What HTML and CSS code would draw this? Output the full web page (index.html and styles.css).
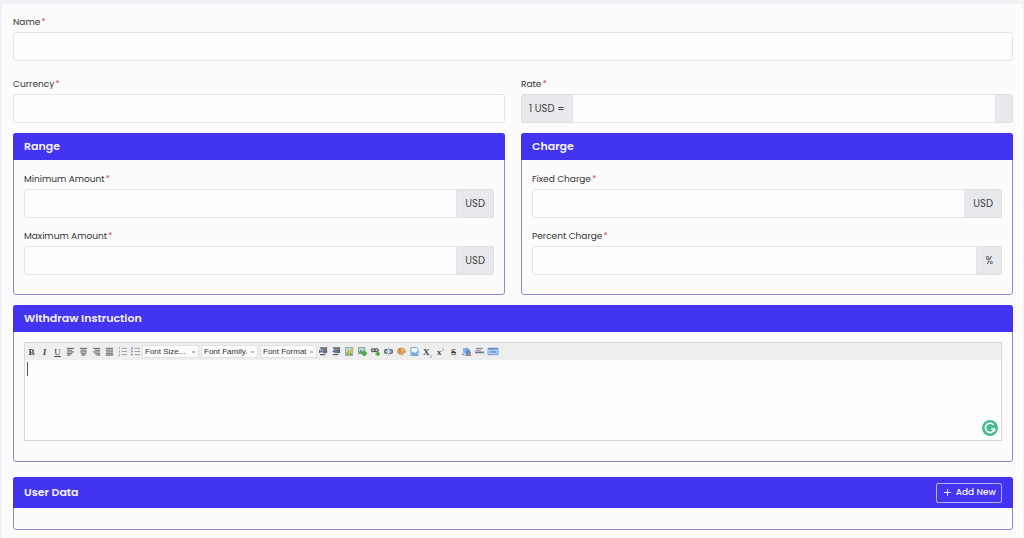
FILE: index.html
```html
<!DOCTYPE html>
<html lang="en">
<head>
    <meta charset="UTF-8">
    <meta name="viewport" content="width=device-width, initial-scale=1.0">
    <title>Withdraw Method</title>
    <link rel="stylesheet" href="styles.css">
</head>
<body>
    <form class="method-form">
        <div class="form-group">
            <label for="name">Name<span class="required">*</span></label>
            <input class="form-control" type="text" id="name" name="name" required>
        </div>

        <div class="row">
            <div class="form-group">
                <label for="currency">Currency<span class="required">*</span></label>
                <input class="form-control" type="text" id="currency" name="currency" required>
            </div>
            <div class="form-group">
                <label for="rate">Rate<span class="required">*</span></label>
                <div class="input-group">
                    <span class="input-text">1 USD =</span>
                    <input class="form-control" type="text" id="rate" name="rate" required>
                    <span class="input-text empty"></span>
                </div>
            </div>
        </div>

        <div class="row cards">
            <section class="card">
                <h2 class="card-header">Range</h2>
                <div class="card-body">
                    <div class="form-group">
                        <label for="minAmount">Minimum Amount<span class="required">*</span></label>
                        <div class="input-group">
                            <input class="form-control" type="text" id="minAmount" name="min_limit" required>
                            <span class="input-text">USD</span>
                        </div>
                    </div>
                    <div class="form-group">
                        <label for="maxAmount">Maximum Amount<span class="required">*</span></label>
                        <div class="input-group">
                            <input class="form-control" type="text" id="maxAmount" name="max_limit" required>
                            <span class="input-text">USD</span>
                        </div>
                    </div>
                </div>
            </section>
            <section class="card">
                <h2 class="card-header">Charge</h2>
                <div class="card-body">
                    <div class="form-group">
                        <label for="fixedCharge">Fixed Charge<span class="required">*</span></label>
                        <div class="input-group">
                            <input class="form-control" type="text" id="fixedCharge" name="fixed_charge" required>
                            <span class="input-text">USD</span>
                        </div>
                    </div>
                    <div class="form-group">
                        <label for="percentCharge">Percent Charge<span class="required">*</span></label>
                        <div class="input-group">
                            <input class="form-control" type="text" id="percentCharge" name="percent_charge" required>
                            <span class="input-text">%</span>
                        </div>
                    </div>
                </div>
            </section>
        </div>

        <section class="card">
            <h2 class="card-header">Withdraw Instruction</h2>
            <div class="card-body">
                <div class="editor">
                    <div class="toolbar">
                        <button type="button" aria-label="Bold"><b>B</b></button>
                        <button type="button" aria-label="Italic"><b><i>I</i></b></button>
                        <button type="button" aria-label="Underline"><u>U</u></button>
                        <button type="button" aria-label="Align left"><svg viewBox="0 0 10 10"><path d="M1 1.5h8M1 3.5h6M1 5.5h8M1 7.5h6M1 9h4" stroke="#555"/></svg></button>
                        <button type="button" aria-label="Align center"><svg viewBox="0 0 10 10"><path d="M1 1.5h8M2 3.5h6M1 5.5h8M2 7.5h6M3 9h4" stroke="#555"/></svg></button>
                        <button type="button" aria-label="Align right"><svg viewBox="0 0 10 10"><path d="M1 1.5h8M3 3.5h6M1 5.5h8M3 7.5h6M5 9h4" stroke="#555"/></svg></button>
                        <button type="button" aria-label="Justify"><svg viewBox="0 0 10 10"><path d="M1 1.5h8M1 3.5h8M1 5.5h8M1 7.5h8M1 9h8" stroke="#555"/></svg></button>
                        <button type="button" aria-label="Numbered list"><svg viewBox="0 0 10 10"><path d="M1.5 0v2.5M1.5 3.8v2.5M1.5 7.5v2.5" stroke="#8aa6cc"/><path d="M4 1.5h6M4 5h6M4 8.5h6" stroke="#999"/></svg></button>
                        <button type="button" aria-label="Bulleted list"><svg viewBox="0 0 10 10"><path d="M0 1.5h2M0 5h2M0 8.5h2" stroke="#7f9fcb" stroke-width="2"/><path d="M4 1.5h6M4 5h6M4 8.5h6" stroke="#999"/></svg></button>
                        <select aria-label="Font size"><option>Font Size...</option></select>
                        <select aria-label="Font family"><option>Font Family.</option></select>
                        <select aria-label="Font format"><option>Font Format</option></select>
                        <button type="button" aria-label="Indent"><svg viewBox="0 0 10 10"><path d="M1 1h8v6H4" fill="#8b9099"/><path d="M1 1h8M5 3.5h4M5 5.5h4M1 8.5h6" stroke="#5c6066" stroke-width="1.5"/><path d="M0 3l4 2-4 2z" fill="#3f6ca8"/></svg></button>
                        <button type="button" aria-label="Outdent"><svg viewBox="0 0 10 10"><path d="M1 1h8v6H4" fill="#8b9099"/><path d="M1 1h8M5 3.5h4M5 5.5h4M1 8.5h6" stroke="#5c6066" stroke-width="1.5"/><path d="M4 3L0 5l4 2z" fill="#3f6ca8"/></svg></button>
                        <button type="button" aria-label="Edit image"><svg viewBox="0 0 10 10"><path d="M.5.5h8v9h-8z" fill="#bdd8c0" stroke="#8ca7ab"/><path d="M1 8l3-4 4 4v1H1z" fill="#6bab5b"/><path d="M3 7l5-6 2 1-5 6-2 1z" fill="#e5b950"/></svg></button>
                        <button type="button" aria-label="Add image"><svg viewBox="0 0 10 10"><path d="M.5.5h7v7h-7z" fill="#b7d6de" stroke="#7ea398"/><path d="M1 6l2-3 4 4H1z" fill="#5b9f52"/><path d="M7 4v6M4 7h6" stroke="#4aa548" stroke-width="2.5"/></svg></button>
                        <button type="button" aria-label="Add link"><svg viewBox="0 0 10 10"><rect x=".5" y="2" width="4" height="3" rx="1.5" fill="none" stroke="#565d67" stroke-width="1.5"/><rect x="4" y="2" width="4" height="3" rx="1.5" fill="none" stroke="#565d67" stroke-width="1.5"/><path d="M7.5 5v5M5 7.5h5" stroke="#54a34a" stroke-width="2"/></svg></button>
                        <button type="button" aria-label="Remove link"><svg viewBox="0 0 10 10"><path d="M4 3H2.500a2 2 0 000 4H4M6 3h1.500a2 2 0 010 4H6" fill="#a9b8cc" stroke="#61738d" stroke-width="1.5"/><path d="M5 1v1.500M5 7.500v1.500" stroke="#889"/></svg></button>
                        <button type="button" aria-label="Font color"><svg viewBox="0 0 10 10"><path d="M5 .5C8 .5 10 2.500 10 5S8 6 7.500 7.500 6 9.500 4 9C1.500 8.500 0 7 0 4.500S2 .5 5 .5z" fill="#dba15f"/><circle cx="3" cy="3" r="1" fill="#c4644d"/><circle cx="6.500" cy="3" r="1" fill="#f0d77c"/><circle cx="3" cy="6" r="1" fill="#7d94a8"/></svg></button>
                        <button type="button" aria-label="Background color"><svg viewBox="0 0 10 10"><path d="M1 .5h6l2 2v7H1z" fill="#f1f8ff" stroke="#6d9bd0"/><path d="M1.500 9V6l2-1 2 2 3-3v5z" fill="#75ace0"/></svg></button>
                        <button type="button" aria-label="Subscript"><span><b>X</b><sub>2</sub></span></button>
                        <button type="button" aria-label="Superscript"><span><b>x</b><sup>2</sup></span></button>
                        <button type="button" aria-label="Strike through"><s><b>S</b></s></button>
                        <button type="button" aria-label="Remove formatting"><svg viewBox="0 0 10 10"><path d="M1 1h5v6H1z" fill="#8cb4e2"/><path d="M4 3h4l2 3v4H4z" fill="#5d8fcf"/><path d="M5 1l4 3M0 8l3 1" stroke="#597aa4"/><circle cx="8" cy="8" r="1.5" fill="#d98c64"/></svg></button>
                        <button type="button" aria-label="Horizontal rule"><svg viewBox="0 0 10 10"><path d="M1 1.5h8M1 3.5h6" stroke="#777"/><path d="M0 6h10" stroke="#6680a8" stroke-width="2"/></svg></button>
                        <button type="button" aria-label="Edit HTML"><svg class="wide" viewBox="0 0 12 10"><path d="M.5 1.5h11v7H.5z" fill="#dceafa" stroke="#5c8dd0"/><path d="M1 2h10" stroke="#5c8dd0" stroke-width="2"/><path d="M2 4h8v3H2z" fill="#72a3df"/></svg></button>
                    </div>
                    <textarea class="editor-area" id="instruction" name="instruction" aria-label="Withdraw Instruction"></textarea>
                    <span class="caret"></span>
                    <svg class="checker" viewBox="0 0 16 16"><circle cx="8" cy="8" r="8" fill="#4cba92"/><path d="M11.5 4.8A4.600 4.600 0 1 0 12.500 9H9.200M12.500 8.500v3" fill="none" stroke="#fff" stroke-width="1.5"/></svg>
                </div>
            </div>
        </section>

        <section class="card user-data">
            <div class="card-header">
                <h2>User Data</h2>
                <button type="button" class="add-button"><svg viewBox="0 0 8 8"><path d="M4 0v8M0 4h8" stroke="#fff"/></svg>Add New</button>
            </div>
            <div class="card-body"></div>
        </section>
    </form>
</body>
</html>
```

FILE: styles.css
```css
* {
    box-sizing: border-box;
}
body {
    margin: 0;
    padding: 4px 1px 0 2px;
    background-color: #f1f1f6;
    font-family: Poppins, Inter, sans-serif;
    color: #333;
}
.method-form {
    padding: 10px 10px 9px 11px;
    background-color: #fcfcfd;
}
.row {
    display: grid;
    grid-template-columns: 1fr 1fr;
    gap: 16px;
    margin-top: 15px;
}
.row.cards {
    margin: 10px 0;
}
label {
    display: block;
    margin-bottom: 2px;
    font-size: 9px;
    font-weight: 400;
    line-height: 16px;
}
.required {
    margin-left: 1px;
    color: #e0555a;
}
.form-control {
    display: block;
    width: 100%;
    height: 29px;
    padding: 0 10px;
    border: 1px solid #e4e5e9;
    border-radius: 3px;
    background-color: #fdfdfd;
    font-family: inherit;
    font-size: 10px;
    color: #444;
}
.input-group {
    display: flex;
}
.input-group .form-control {
    flex: 1;
    min-width: 0;
}
.input-group .form-control:first-child {
    border-radius: 3px 0 0 3px;
}
.input-group .form-control:not(:first-child) {
    border-radius: 0;
}
.input-text {
    display: flex;
    align-items: center;
    padding: 0 8px;
    border: 1px solid #dfe1e5;
    border-left: none;
    border-radius: 0 3px 3px 0;
    background-color: #e8e9ed;
    font-size: 10px;
    font-weight: 400;
    color: #444;
}
.input-text:first-child {
    padding: 0 8px 0 7px;
    border-left: 1px solid #dfe1e5;
    border-right: none;
    border-radius: 3px 0 0 3px;
}

.card {
    border: 1px solid #8f88d0;
    border-radius: 3px;
}
.card-header {
    margin: -1px -1px 0;
    padding: 0 11px;
    border-radius: 3px 3px 0 0;
    background-color: #4334f2;
    color: #f4f3ff;
    font-size: 11px;
    font-weight: 600;
    line-height: 27px;
}
.card-body {
    padding: 10px 10px 20px;
}
.row .card-body {
    padding-top: 11px;
    padding-bottom: 19px;
}
.card-body .form-group + .form-group {
    margin-top: 10px;
}

.editor {
    position: relative;
    border: 1px solid #d8d8dc;
}
.toolbar {
    display: flex;
    align-items: center;
    height: 17px;
    background-color: #eee;
}
.toolbar button {
    display: flex;
    align-items: center;
    justify-content: center;
    width: 13px;
    height: 14px;
    padding: 0;
    border: none;
    background: none;
    font-family: "Liberation Serif", serif;
    font-size: 9px;
    color: #444;
}
.toolbar svg {
    width: 9px;
    height: 9px;
}
.toolbar svg.wide {
    width: 12px;
}
.toolbar sub, .toolbar sup {
    font-size: 5px;
    line-height: 1px;
    color: #4a78b8;
}
.toolbar select {
    appearance: none;
    width: 57px;
    height: 13px;
    margin-right: 2px;
    padding: 0 2px;
    border: 1px solid #e2e2e2;
    border-radius: 0;
    background: linear-gradient(#bbb, #bbb) no-repeat right 3px center / 3px 2px, #fcfcfc;
    font-family: "Liberation Sans", sans-serif;
    font-size: 8px;
    line-height: 11px;
    color: #333;
}
.toolbar select:last-of-type {
    margin-right: 0;
}
.editor-area {
    display: block;
    width: 100%;
    height: 80px;
    padding: 4px;
    border: none;
    resize: none;
    background-color: #fdfdfd;
    font-family: inherit;
    font-size: 10px;
}
.caret {
    position: absolute;
    top: 19px;
    left: 2px;
    width: 1px;
    height: 14px;
    background-color: #555;
}
.checker {
    position: absolute;
    right: 3px;
    bottom: 4px;
    width: 16px;
    height: 16px;
}

.user-data {
    margin-top: 15px;
}
.user-data .card-header {
    display: flex;
    align-items: center;
    justify-content: space-between;
    height: 31px;
}
.user-data h2 {
    margin: 0;
    font-size: 11px;
    font-weight: 600;
}
.user-data .card-body {
    height: 21px;
    padding: 0;
}
.add-button {
    display: flex;
    align-items: center;
    gap: 5px;
    height: 20px;
    padding: 0 5px 0 7px;
    border: 1px solid #b9b3fb;
    border-radius: 2px;
    background: none;
    font-family: inherit;
    font-size: 9px;
    font-weight: 500;
    color: #f4f3ff;
    cursor: pointer;
}
.add-button svg {
    width: 7px;
    height: 7px;
}
```
